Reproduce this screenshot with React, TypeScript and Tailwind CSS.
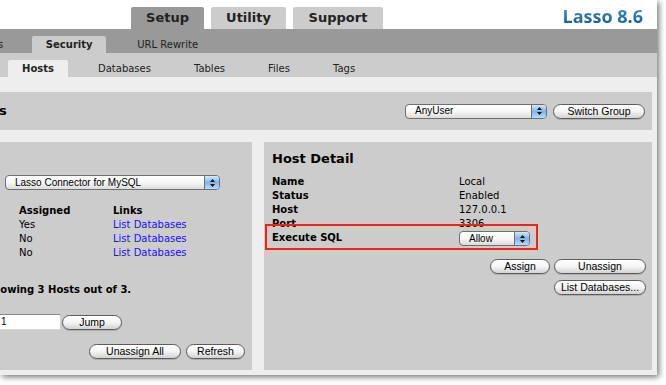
import React from "react";

function Select({ label, className }: { label: string; className: string }) {
  return (
    <div
      className={
        "flex h-[15px] items-stretch rounded-[4px] border border-[#6f6f6f] bg-gradient-to-b from-white via-[#f6f6f6] to-[#dcdcdc] font-['Liberation_Sans',sans-serif] text-[10px] leading-none text-black " +
        className
      }
    >
      <div className="flex flex-1 items-center pl-[9px]">{label}</div>
      <div className="flex w-[15px] flex-col items-center justify-center gap-[2px] rounded-r-[3px] border-l border-[#6f6f6f] bg-gradient-to-b from-[#d4e8fb] via-[#79b6ef] to-[#b9dcfa]">
        <svg width="5" height="3" viewBox="0 0 5 3">
          <path d="M2.5 0 L5 3 L0 3 Z" fill="#111" />
        </svg>
        <svg width="5" height="3" viewBox="0 0 5 3">
          <path d="M0 0 L5 0 L2.5 3 Z" fill="#111" />
        </svg>
      </div>
    </div>
  );
}

function Btn({ label, className }: { label: string; className: string }) {
  return (
    <div
      className={
        "flex h-[15px] items-center justify-center rounded-full border border-[#5c5c5c] bg-gradient-to-b from-white via-[#f4f4f4] to-[#d2d2d2] font-['Liberation_Sans',sans-serif] text-[10.5px] leading-none text-black shadow-[0_1px_0_rgba(0,0,0,0.15)] " +
        className
      }
    >
      {label}
    </div>
  );
}

export default function App() {
  return (
    <div className="relative h-[385px] w-[666px] overflow-hidden bg-white font-['DejaVu_Sans',sans-serif] text-[10px] leading-[14px] text-black">
      <div className="relative flex h-[375px] w-[657px] flex-col overflow-hidden bg-[#eeeeee] shadow-[2px_2px_6px_rgba(0,0,0,0.55)]">
        {/* top tabs */}
        <div className="flex h-[29px] shrink-0 bg-white">
          <div className="flex items-end pl-[131px]">
            <div className="flex h-[22px] w-[73px] items-center justify-center rounded-t-[2px] bg-[#999999] text-[13px] font-bold text-[#222]">
              Setup
            </div>
            <div className="ml-[7px] flex h-[22px] w-[75px] items-center justify-center rounded-t-[2px] bg-[#cccccc] text-[13px] font-bold text-[#222]">
              Utility
            </div>
            <div className="ml-[7px] flex h-[22px] w-[90px] items-center justify-center rounded-t-[2px] bg-[#cccccc] text-[13px] font-bold text-[#222]">
              Support
            </div>
          </div>
          <div className="ml-auto mr-[14px] pt-[6px] font-['Open_Sans',sans-serif] text-[18px] font-bold leading-[20px]">
            <span className="bg-gradient-to-b from-[#3ea3d8] to-[#13507f] bg-clip-text text-transparent">
              Lasso 8.6
            </span>
          </div>
        </div>

        {/* second row */}
        <div className="flex h-[24px] shrink-0 items-end bg-[#999999]">
          <div className="ml-[-2px] flex h-[17px] items-center text-[#222]">s</div>
          <div className="ml-[29px] flex h-[17px] w-[74px] items-center justify-center rounded-t-[2px] bg-[#cccccc] font-bold text-[#222]">
            Security
          </div>
          <div className="ml-[31px] flex h-[17px] items-center text-[#222]">URL Rewrite</div>
        </div>

        {/* third row */}
        <div className="flex h-[24px] shrink-0 items-end bg-[#cccccc]">
          <div className="ml-[8px] flex h-[17px] w-[60px] items-center justify-center rounded-t-[2px] bg-[#eeeeee] font-bold text-[#222]">
            Hosts
          </div>
          <div className="ml-[30px] flex h-[17px] items-center gap-[43px] text-[#222]">
            <span>Databases</span>
            <span>Tables</span>
            <span>Files</span>
            <span>Tags</span>
          </div>
        </div>

        {/* group bar */}
        <div className="mt-[15px] flex h-[38px] w-[652px] shrink-0 items-center bg-[#cccccc] pr-[7px]">
          <div className="ml-[-1px] text-[13px] font-bold leading-[16px]">s</div>
          <Select label="AnyUser" className="ml-auto w-[142px]" />
          <Btn label="Switch Group" className="ml-[6px] w-[92px]" />
        </div>

        {/* panels */}
        <div className="mt-[12px] flex h-[228px] shrink-0 gap-[12px]">
          {/* left panel */}
          <div className="flex w-[252px] flex-col bg-[#cccccc] pr-[7px]">
            <Select label="Lasso Connector for MySQL" className="ml-[5px] mt-[33px] w-[215px]" />
            <div className="mt-[14px] grid grid-cols-[94px_1fr] pl-[19px]">
              <div className="font-bold">Assigned</div>
              <div className="font-bold">Links</div>
              <div>Yes</div>
              <div className="text-[#1414f0]">List Databases</div>
              <div>No</div>
              <div className="text-[#1414f0]">List Databases</div>
              <div>No</div>
              <div className="text-[#1414f0]">List Databases</div>
            </div>
            <div className="ml-[-14px] mt-[23px] whitespace-nowrap font-bold">Showing 3 Hosts out of 3.</div>
            <div className="mt-[17px] flex items-center">
              <div className="ml-[-4px] flex h-[16px] w-[65px] items-center border border-t-[#8a8a8a] border-l-[#9a9a9a] border-r-[#d0d0d0] border-b-[#d8d8d8] bg-white pl-[4px] font-['Liberation_Sans',sans-serif] text-[10px]">
                1
              </div>
              <Btn label="Jump" className="ml-[1px] w-[60px]" />
            </div>
            <div className="mt-[14px] flex justify-end gap-[5px]">
              <Btn label="Unassign All" className="w-[92px]" />
              <Btn label="Refresh" className="w-[59px]" />
            </div>
          </div>

          {/* right panel */}
          <div className="relative flex w-[388px] flex-col bg-[#cccccc] pl-[8px] pr-[6px]">
            <div className="mt-[9px] text-[13px] font-bold leading-[16px]">Host Detail</div>
            <div className="mt-[8px] grid grid-cols-[187px_1fr]">
              <div className="font-bold">Name</div>
              <div>Local</div>
              <div className="font-bold">Status</div>
              <div>Enabled</div>
              <div className="font-bold">Host</div>
              <div>127.0.0.1</div>
              <div className="font-bold">Port</div>
              <div>3306</div>
              <div className="font-bold">Execute SQL</div>
              <div>
                <Select label="Allow" className="w-[71px]" />
              </div>
            </div>
            <div className="mt-[13px] flex justify-end gap-[4px]">
              <Btn label="Assign" className="w-[60px]" />
              <Btn label="Unassign" className="w-[92px]" />
            </div>
            <div className="mt-[6px] flex justify-end">
              <Btn label="List Databases..." className="w-[92px]" />
            </div>
            <div className="absolute left-[1px] top-[82px] h-[26px] w-[273px] border-2 border-[#ee2418]" />
          </div>
        </div>
      </div>
    </div>
  );
}
